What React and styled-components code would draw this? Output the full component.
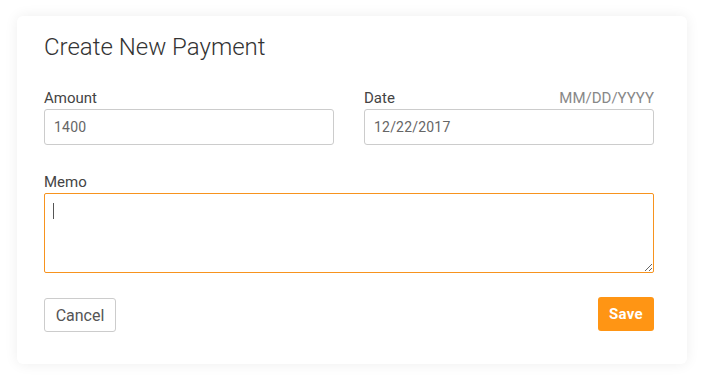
import React from "react";
import styled, { createGlobalStyle } from "styled-components";

const GlobalStyle = createGlobalStyle`
  body {
    margin: 0;
    background: #ffffff;
    font-family: Roboto, "Liberation Sans", sans-serif;
  }
`;

function App() {
  return (
    <>
      <GlobalStyle />
      <Page>
        <Card>
          <Title>Create New Payment</Title>
          <Row>
            <Field>
              <LabelRow>
                <Label>Amount</Label>
              </LabelRow>
              <Input defaultValue="1400" />
            </Field>
            <Field>
              <LabelRow>
                <Label>Date</Label>
                <Hint>MM/DD/YYYY</Hint>
              </LabelRow>
              <Input defaultValue="12/22/2017" />
            </Field>
          </Row>
          <MemoField>
            <LabelRow>
              <Label>Memo</Label>
            </LabelRow>
            <MemoBox>
              <Memo />
              <Caret />
            </MemoBox>
          </MemoField>
          <Actions>
            <CancelButton>Cancel</CancelButton>
            <SaveButton>Save</SaveButton>
          </Actions>
        </Card>
      </Page>
    </>
  );
}

export default App;

const Page = styled.div`
  padding: 16px 17px 19px 17px;
`;

const Card = styled.div`
  box-sizing: border-box;
  width: 670px;
  height: 348px;
  background: #fff;
  border-radius: 6px;
  box-shadow: 0 0 14px rgba(0, 0, 0, 0.07);
  padding: 16px 33px 0 27px;
`;

const Title = styled.h1`
  margin: 0;
  font-size: 24px;
  line-height: 30px;
  font-weight: 300;
  color: #333;
`;

const Row = styled.div`
  display: grid;
  grid-template-columns: 290px 290px;
  column-gap: 30px;
  margin-top: 26px;
`;

const Field = styled.div`
  display: flex;
  flex-direction: column;
`;

const MemoField = styled(Field)`
  margin-top: 27px;
`;

const LabelRow = styled.div`
  display: flex;
  justify-content: space-between;
  align-items: baseline;
  height: 20px;
  margin-bottom: 1px;
`;

const Label = styled.label`
  font-size: 15px;
  line-height: 20px;
  color: #444;
`;

const Hint = styled.span`
  font-size: 15px;
  line-height: 20px;
  color: #888;
`;

const Input = styled.input`
  box-sizing: border-box;
  height: 36px;
  width: 100%;
  border: 1px solid #ccc;
  border-radius: 3px;
  padding: 0 9px;
  font-family: Roboto, "Liberation Sans", sans-serif;
  font-size: 14px;
  letter-spacing: 0.2px;
  color: #666;
  outline: none;
`;

const MemoBox = styled.div`
  position: relative;
`;

const Memo = styled.textarea`
  box-sizing: border-box;
  height: 80px;
  width: 100%;
  border: 1px solid #f7931e;
  border-radius: 2px;
  padding: 8px 8px;
  font-family: Roboto, "Liberation Sans", sans-serif;
  font-size: 14px;
  color: #555;
  outline: none;
  display: block;
`;

const Caret = styled.span`
  position: absolute;
  left: 9px;
  top: 10px;
  width: 1px;
  height: 16px;
  background: #555;
`;

const Actions = styled.div`
  display: flex;
  justify-content: space-between;
  align-items: center;
  margin-top: 24px;
`;

const CancelButton = styled.button`
  box-sizing: border-box;
  height: 34px;
  width: 72px;
  margin-top: 1px;
  background: #fff;
  border: 1px solid #ccc;
  border-radius: 3px;
  font-family: Roboto, "Liberation Sans", sans-serif;
  font-size: 16px;
  color: #555;
`;

const SaveButton = styled.button`
  box-sizing: border-box;
  height: 34px;
  width: 56px;
  margin-top: -1px;
  background: #ff9514;
  border: none;
  border-radius: 3px;
  font-family: Roboto, "Liberation Sans", sans-serif;
  font-size: 15px;
  font-weight: 700;
  letter-spacing: 0.3px;
  color: #fff;
`;
